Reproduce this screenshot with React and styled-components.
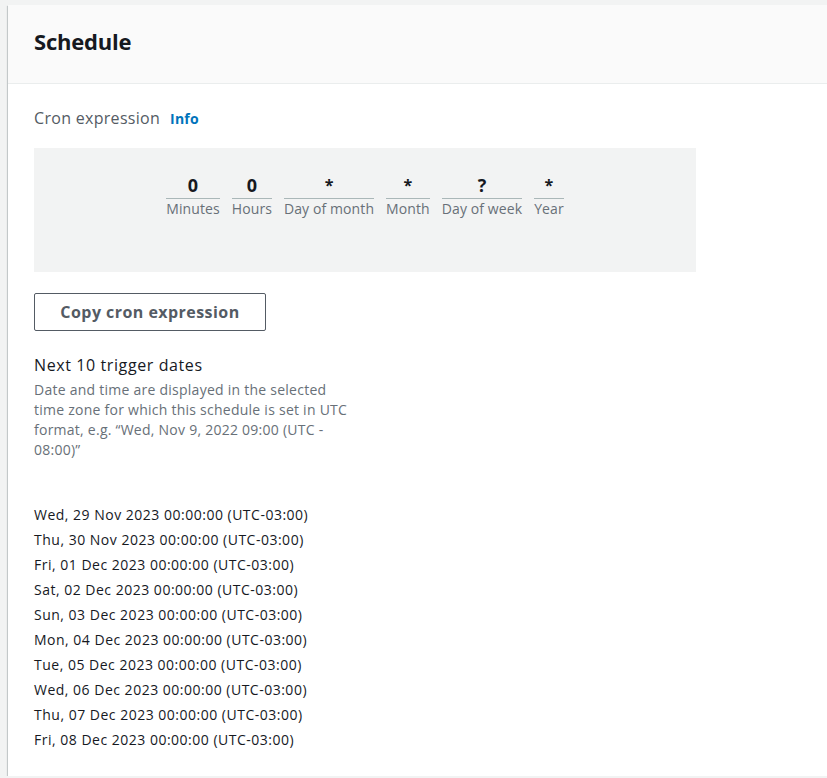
import React from "react";
import styled, { createGlobalStyle } from "styled-components";

const GlobalStyle = createGlobalStyle`
  html, body {
    margin: 0;
    padding: 0;
    background: #f2f3f3;
    overflow: hidden;
    font-family: "Open Sans", "Noto Sans", sans-serif;
    color: #16191f;
  }
`;

const Page = styled.div`
  padding: 5px 0 0 8px;
`;

const Card = styled.section`
  background: #fff;
  margin-right: -40px;
  box-shadow: 0 1px 1px 0 rgba(0, 28, 36, 0.3), 1px 1px 1px 0 rgba(0, 28, 36, 0.15),
    -1px 1px 1px 0 rgba(0, 28, 36, 0.15);
`;

const Header = styled.header`
  background: #fafafa;
  border-bottom: 1px solid #eaeded;
  height: 72px;
  display: flex;
  align-items: center;
  padding: 0 26px 6px;
  box-sizing: content-box;
`;

const Title = styled.h2`
  margin: 0;
  font-size: 22px;
  font-weight: 700;
  color: #16191f;
  letter-spacing: -0.2px;
`;

const Body = styled.div`
  padding: 23px 26px 24px;
`;

const LabelRow = styled.div`
  display: flex;
  align-items: baseline;
  gap: 10px;
  height: 27px;
`;

const Label = styled.span`
  font-size: 16px;
  color: #545b64;
  letter-spacing: 0.3px;
`;

const InfoLink = styled.a`
  font-size: 14px;
  font-weight: 700;
  color: #0073bb;
  text-decoration: none;
  letter-spacing: 0.2px;
`;

const CronBox = styled.div`
  margin-top: 14px;
  width: 662px;
  height: 124px;
  background: #f2f3f3;
  display: flex;
  justify-content: center;
  align-items: flex-start;
  padding-top: 26px;
  box-sizing: border-box;
  gap: 12px;
`;

const Field = styled.div`
  display: flex;
  flex-direction: column;
  align-items: stretch;
  text-align: center;
`;

const FieldValue = styled.div`
  font-size: ${(p) => (p.star ? "16px" : "18px")};
  font-weight: 700;
  line-height: 22px;
  height: 24px;
  color: #16191f;
  border-bottom: 1px solid #aab7b8;
`;

const FieldLabel = styled.div`
  font-size: 14px;
  line-height: 20px;
  color: #687078;
  letter-spacing: 0.1px;
`;

const CopyButton = styled.button`
  margin-top: 21px;
  width: 232px;
  height: 38px;
  border: 1px solid #545b64;
  border-radius: 2px;
  background: #fff;
  color: #545b64;
  font-family: inherit;
  font-size: 16px;
  font-weight: 700;
  letter-spacing: 0.45px;
  cursor: pointer;
`;

const SubTitle = styled.h3`
  margin: 23px 0 0;
  font-size: 16px;
  font-weight: 400;
  line-height: 22px;
  color: #16191f;
  letter-spacing: 0.6px;
`;

const Description = styled.p`
  margin: 4px 0 0;
  max-width: 322px;
  font-size: 14px;
  line-height: 20px;
  color: #687078;
  letter-spacing: 0.25px;
`;

const DateList = styled.ul`
  list-style: none;
  margin: 42px 0 0;
  padding: 0;
`;

const DateItem = styled.li`
  font-size: 14px;
  line-height: 25px;
  color: #16191f;
  letter-spacing: 0.5px;
`;

const fields = [
  { value: "0", label: "Minutes" },
  { value: "0", label: "Hours" },
  { value: "*", label: "Day of month", star: true },
  { value: "*", label: "Month", star: true },
  { value: "?", label: "Day of week" },
  { value: "*", label: "Year", star: true },
];

const dates = [
  "Wed, 29 Nov 2023",
  "Thu, 30 Nov 2023",
  "Fri, 01 Dec 2023",
  "Sat, 02 Dec 2023",
  "Sun, 03 Dec 2023",
  "Mon, 04 Dec 2023",
  "Tue, 05 Dec 2023",
  "Wed, 06 Dec 2023",
  "Thu, 07 Dec 2023",
  "Fri, 08 Dec 2023",
];

export default function App() {
  return (
    <Page>
      <GlobalStyle />
      <Card>
        <Header>
          <Title>Schedule</Title>
        </Header>
        <Body>
          <LabelRow>
            <Label>Cron expression</Label>
            <InfoLink href="#">Info</InfoLink>
          </LabelRow>
          <CronBox>
            {fields.map((f) => (
              <Field key={f.label}>
                <FieldValue star={f.star}>{f.value}</FieldValue>
                <FieldLabel>{f.label}</FieldLabel>
              </Field>
            ))}
          </CronBox>
          <CopyButton>Copy cron expression</CopyButton>
          <SubTitle>Next 10 trigger dates</SubTitle>
          <Description>
            Date and time are displayed in the selected time zone for which this schedule is set in
            UTC format, e.g. “Wed, Nov 9, 2022 09:00 (UTC -<wbr />08:00)”
          </Description>
          <DateList>
            {dates.map((d) => (
              <DateItem key={d}>{d} 00:00:00 (UTC-03:00)</DateItem>
            ))}
          </DateList>
        </Body>
      </Card>
    </Page>
  );
}
